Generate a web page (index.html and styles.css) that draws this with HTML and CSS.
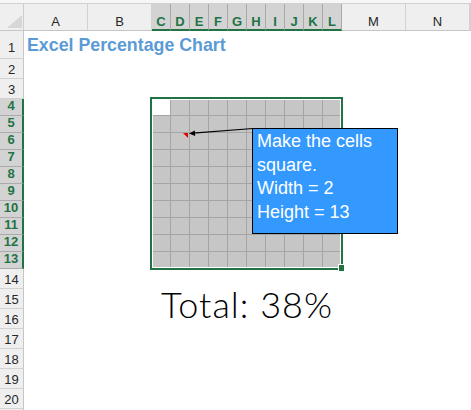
FILE: index.html
```
<!DOCTYPE html>
<html>
<head>
<meta charset="utf-8">
<link rel="stylesheet" href="styles.css">
</head>
<body>
<div class="topbar"></div>
<div class="colhdr">
  <div class="corner"></div>
  <div class="ch w64">A</div>
  <div class="ch w64">B</div>
  <div class="ch w19 sel">C</div>
  <div class="ch w19 sel">D</div>
  <div class="ch w19 sel">E</div>
  <div class="ch w19 sel">F</div>
  <div class="ch w19 sel">G</div>
  <div class="ch w19 sel">H</div>
  <div class="ch w19 sel">I</div>
  <div class="ch w19 sel">J</div>
  <div class="ch w19 sel">K</div>
  <div class="ch w19 sel">L</div>
  <div class="ch w64">M</div>
  <div class="ch w64">N</div>
  <div class="ch rest"></div>
</div>
<div class="body">
  <div class="rowhdr">
    <div class="rh h28">1</div>
    <div class="rh h20">2</div>
    <div class="rh h20">3</div>
    <div class="rh h17 sel">4</div>
    <div class="rh h17 sel">5</div>
    <div class="rh h17 sel">6</div>
    <div class="rh h17 sel">7</div>
    <div class="rh h17 sel">8</div>
    <div class="rh h17 sel">9</div>
    <div class="rh h17 sel">10</div>
    <div class="rh h17 sel">11</div>
    <div class="rh h17 sel">12</div>
    <div class="rh h17 sel">13</div>
    <div class="rh h20">14</div>
    <div class="rh h20">15</div>
    <div class="rh h20">16</div>
    <div class="rh h20">17</div>
    <div class="rh h20">18</div>
    <div class="rh h20">19</div>
    <div class="rh h20">20</div>
    <div class="rh h20"></div>
  </div>
  <div class="canvas">
    <div class="title">Excel Percentage Chart</div>
    <div class="chart">
      <div class="grid">
        <i class="on"></i><i></i><i></i><i></i><i></i><i></i><i></i><i></i><i></i><i></i>
        <i></i><i></i><i></i><i></i><i></i><i></i><i></i><i></i><i></i><i></i>
        <i></i><i></i><i></i><i></i><i></i><i></i><i></i><i></i><i></i><i></i>
        <i></i><i></i><i></i><i></i><i></i><i></i><i></i><i></i><i></i><i></i>
        <i></i><i></i><i></i><i></i><i></i><i></i><i></i><i></i><i></i><i></i>
        <i></i><i></i><i></i><i></i><i></i><i></i><i></i><i></i><i></i><i></i>
        <i></i><i></i><i></i><i></i><i></i><i></i><i></i><i></i><i></i><i></i>
        <i></i><i></i><i></i><i></i><i></i><i></i><i></i><i></i><i></i><i></i>
        <i></i><i></i><i></i><i></i><i></i><i></i><i></i><i></i><i></i><i></i>
        <i></i><i></i><i></i><i></i><i></i><i></i><i></i><i></i><i></i><i></i>
      </div>
      <div class="selbox"></div>
      <div class="handle"></div>
      <svg class="arrow" width="190" height="170" viewBox="0 0 190 170">
        <polygon points="31,34 36,34 36,39" fill="#e00000"/>
        <line x1="101" y1="29.5" x2="41" y2="34.2" stroke="#000" stroke-width="1.2"/>
        <polygon points="37,34.4 43.2,37 42.8,31.6" fill="#000"/>
      </svg>
      <div class="note">Make the cells<br>square.<br>Width = 2<br>Height = 13</div>
    </div>
    <div class="total">Total: 38%</div>
  </div>
</div>
</body>
</html>
```
FILE: styles.css
```
* {
  box-sizing: border-box;
  margin: 0;
  padding: 0;
}
html, body {
  width: 471px;
  height: 410px;
  overflow: hidden;
  background: #fff;
}
body {
  font-family: "Liberation Sans", Arial, sans-serif;
}
.topbar {
  height: 4px;
  background: #f7f7f7;
  border-bottom: 1px solid #cfcfcf;
}
.colhdr {
  display: flex;
  height: 27px;
}
.corner {
  flex: none;
  width: 24px;
  background: #efefef;
  border-right: 1px solid #cdcdcd;
  border-bottom: 1px solid #c6c6c6;
  position: relative;
}
.corner::after {
  content: "";
  position: absolute;
  right: 1px;
  bottom: 2px;
  width: 15px;
  height: 13px;
  background: #d6d6d6;
  clip-path: polygon(100% 0, 100% 100%, 0 100%);
}
.ch {
  flex: none;
  display: flex;
  justify-content: center;
  align-items: flex-end;
  padding-bottom: 1px;
  background: #efefef;
  border-right: 1px solid #d2d2d2;
  border-bottom: 1px solid #c6c6c6;
  font-size: 13px;
  line-height: 15px;
  color: #262626;
}
.w64 { width: 64px; }
.w19 { width: 19px; }
.rest { flex: 1; }
.ch.sel {
  background: #d3d3d3;
  color: #217346;
  font-weight: bold;
  border-right-color: #a9a9a9;
  border-bottom: 2px solid #217346;
  padding-bottom: 0;
}
.body {
  display: flex;
}
.rowhdr {
  flex: none;
  width: 24px;
  display: flex;
  flex-direction: column;
}
.rh {
  flex: none;
  display: flex;
  justify-content: center;
  align-items: flex-start;
  background: #efefef;
  border-right: 1px solid #c6c6c6;
  border-bottom: 1px solid #d2d2d2;
  font-size: 13px;
  line-height: 15px;
  color: #262626;
}
.h28 { height: 28px; padding-top: 9px; }
.h20 { height: 20px; padding-top: 3px; }
.h17 { height: 17px; line-height: 13px; padding-top: 0; }
.rh.sel {
  background: #d3d3d3;
  color: #217346;
  font-weight: bold;
  border-right: 2px solid #217346;
  border-bottom-color: #ababab;
}
.canvas {
  flex: 1;
  position: relative;
}
.title {
  height: 28px;
  line-height: 28px;
  padding-left: 3px;
  font-size: 17.8px;
  font-weight: bold;
  color: #5b9bd5;
  white-space: nowrap;
}
.chart {
  position: relative;
  margin-top: 40px;
  margin-left: 128px;
  width: 190px;
  height: 170px;
}
.grid {
  display: grid;
  grid-template-columns: repeat(10, 19px);
  grid-auto-rows: 17px;
}
.grid i {
  display: block;
  background: #c6c6c6;
  border-right: 1px solid #a5a5a5;
  border-bottom: 1px solid #a5a5a5;
}
.grid i.on {
  background: #fff;
}
.selbox {
  position: absolute;
  left: -2px;
  top: -2px;
  width: 193px;
  height: 173px;
  border: 2px solid #217346;
  box-shadow: inset 0 0 0 1px #fff;
}
.handle {
  position: absolute;
  left: 187px;
  top: 166px;
  width: 5px;
  height: 6px;
  background: #217346;
  box-shadow: -1px -1px 0 0 #fff;
}
.arrow {
  position: absolute;
  left: 0;
  top: 0;
  overflow: visible;
}
.note {
  position: absolute;
  left: 100px;
  top: 29px;
  width: 146px;
  height: 106px;
  background: #3399ff;
  border: 1px solid #000;
  color: #fff;
  font-size: 18px;
  line-height: 23.7px;
  padding: 1px 0 0 4px;
  white-space: nowrap;
}
.total {
  margin-left: 128px;
  width: 190px;
  margin-top: 14px;
  display: flex;
  justify-content: center;
  font-family: "Lato", "Liberation Sans", sans-serif;
  font-weight: 300;
  font-size: 36px;
  letter-spacing: 1px;
  line-height: 42px;
  color: #000;
  white-space: nowrap;
}
```
